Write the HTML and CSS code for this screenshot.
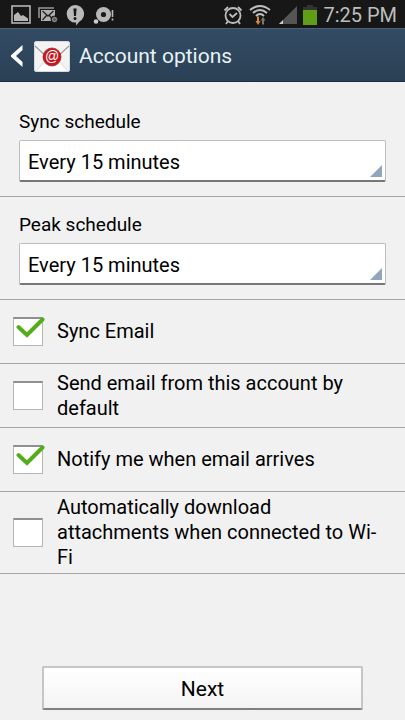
FILE: index.html
```html
<!DOCTYPE html>
<html lang="en">
<head>
<meta charset="utf-8">
<meta name="viewport" content="width=device-width, initial-scale=1">
<title>Account options</title>
<link rel="stylesheet" href="styles.css">
</head>
<body>
<div class="status">
  <div class="status-group notices">
    <svg width="20" height="20" viewBox="0 0 20 20" aria-hidden="true"><rect x="1" y="1" width="18" height="17" fill="none" stroke="#b5b5b5" stroke-width="1.6"/><path d="M3 16V10l4-3 3 4 2-1 5 3.500V16z" fill="#b5b5b5"/></svg>
    <svg width="20" height="20" viewBox="0 0 20 20" aria-hidden="true"><path d="M1 13V3h15" fill="none" stroke="#999" stroke-width="1.500"/><rect x="3" y="5" width="14" height="11" fill="#b0b0b0"/><path d="M4.500 6l5.500 5L15.500 6M4.500 15l4-4.500M15 15l-3.500-4.500" fill="none" stroke="#222" stroke-width="1.300"/><circle cx="16.500" cy="14.500" r="3.500" fill="#555" stroke="#151515"/><circle cx="16.500" cy="14.500" r="1.900" fill="none" stroke="#999"/></svg>
    <svg width="20" height="22" viewBox="0 0 20 22" aria-hidden="true"><path d="M10 1a8.800 8.800 0 1 0 1 17.600V21.500l3.500-4A8.800 8.800 0 0 0 10 1z" fill="#bababa"/><path d="M8.400 4.500h3.200l-.6 7.500H9z" fill="#181818"/><circle cx="10" cy="14.500" r="1.500" fill="#181818"/></svg>
    <svg width="22" height="20" viewBox="0 0 22 20" aria-hidden="true"><circle cx="11.500" cy="9.500" r="7.500" fill="#b8b8b8"/><circle cx="11.500" cy="9.500" r="2.600" fill="#1b1b1b"/><circle cx="4" cy="16.500" r="2.300" fill="#ccc"/><path d="M20.500 5v7M20.500 13.500v2" stroke="#bbb" stroke-width="1.600"/></svg>
  </div>
  <div class="status-group">
    <svg width="20" height="20" viewBox="0 0 20 20" aria-hidden="true"><g fill="none" stroke="#bcbcbc" stroke-width="1.800"><circle cx="10" cy="10.500" r="7.500"/><path d="M6.500 9l3 3 4.500-4M1.500 5.500L5 2M18.500 5.500L15 2M5 16l-2 3M15 16l2 3"/></g></svg>
    <svg class="wifi" width="22" height="22" viewBox="0 0 22 22" aria-hidden="true"><g fill="none" stroke="#c0c0c0" stroke-width="2"><path d="M1 6q10-8 20 0M4 9q7-6 14 0M7 12q4-4 8 0"/></g><path d="M9 12.500v6" stroke="#d58b36" stroke-width="2"/><path d="M6.500 17L9 21l2.500-4z" fill="#d58b36"/><path d="M14 20.500v-5" stroke="#777" stroke-width="2"/><path d="M11.500 16.500L14 13l2.500 3.500z" fill="#777"/></svg>
    <svg class="signal" width="18" height="18" viewBox="0 0 18 18" aria-hidden="true"><path d="M0 18L18 0v18z" fill="#555"/><path d="M0 18l4-4v4z" fill="#ccc"/></svg>
    <svg width="14" height="20" viewBox="0 0 14 20" aria-hidden="true"><path d="M4 0h6v2h4v4H0V2h4z" fill="#333"/><path d="M0 5h14v15H0z" fill="#5f9e16"/></svg>
    <time class="clock">7:25 PM</time>
  </div>
</div>
<header class="bar">
  <button class="back" type="button" aria-label="Back"><svg width="12" height="22" viewBox="0 0 12 22"><path d="M11.500 0v5L5 11l6.500 6v5L0 11.800v-1.600z" fill="#fff"/></svg></button>
  <svg class="mail" width="36" height="31" viewBox="0 0 36 31" aria-hidden="true"><rect x=".5" y=".5" width="35" height="30" rx="1.500" fill="#f3f3f3" stroke="#d5d9dc"/><path d="M1 30l13-13h8l13 13z" fill="#fff"/><path d="M2 30l12-13M34 30L22 17" stroke="#d8d8d8" stroke-width="1"/><path d="M1 5l14 13h6L35 5" fill="none" stroke="#9b9b9b" stroke-width="1.200"/><circle cx="18" cy="16" r="9" fill="#c41920" stroke="#a5262b" stroke-width=".8"/><text class="at" x="18" y="20" text-anchor="middle">@</text></svg>
  <h1>Account options</h1>
</header>
<main>
  <form>
    <div class="field first">
      <label for="sync">Sync schedule</label>
      <div class="spinner"><select id="sync"><option>Every 15 minutes</option></select></div>
    </div>
    <div class="field">
      <label for="peak">Peak schedule</label>
      <div class="spinner"><select id="peak"><option>Every 15 minutes</option></select></div>
    </div>
    <label class="row"><span class="box"><input type="checkbox" checked><svg class="tick" width="30" height="24" viewBox="0 0 30 24" aria-hidden="true"><path d="M3.500 11l8.500 8L27.500 3.500" /></svg></span><span>Sync Email</span></label>
    <label class="row"><span class="box"><input type="checkbox"></span><span>Send email from this account by default</span></label>
    <label class="row"><span class="box"><input type="checkbox" checked><svg class="tick" width="30" height="24" viewBox="0 0 30 24" aria-hidden="true"><path d="M3.500 11l8.500 8L27.500 3.500" /></svg></span><span>Notify me when email arrives</span></label>
    <label class="row"><span class="box"><input type="checkbox"></span><span>Automatically download attachments when connected to Wi-Fi</span></label>
  </form>
</main>
<footer><button class="next" type="button">Next</button></footer>
</body>
</html>
```
FILE: styles.css
```css
* { box-sizing: border-box; }
body {
  margin: 0;
  min-height: 100vh;
  display: flex;
  flex-direction: column;
  background: #f1f1f1;
  color: #000;
  font: 20px/25px Roboto, "Liberation Sans", sans-serif;
}
button, select { font: inherit; color: inherit; }
svg { display: block; flex: none; }
.status {
  height: 28px;
  padding: 2px 8px 0 11px;
  background: #171717;
  display: flex;
  align-items: center;
  justify-content: space-between;
}
.status-group { display: flex; align-items: center; gap: 6px; }
.notices { gap: 7px; }
.signal { margin-left: 2px; }
.clock { color: #bdbdbd; }
.bar {
  height: 54px;
  padding: 2px 0 0 11px;
  display: flex;
  align-items: center;
  background: linear-gradient(#334c64, #2a4055);
  border-top: 1px solid #496078;
  border-bottom: 1px solid #1c2b3e;
}
.back { padding: 0; border: 0; background: none; margin-right: 11px; }
.at { font: 14px "Liberation Sans", sans-serif; fill: #fff; }
h1 {
  margin: 0 0 0 9px;
  font-size: 21px;
  font-weight: 400;
  color: #e6f2f5;
}
main { flex: 1; }
.field {
  padding: 15px 19px 14px;
  border-bottom: 1px solid #a5a5a5;
}
.field.first { padding-top: 27px; }
.field label { display: block; margin-bottom: 6px; font-size: 19px; }
.spinner { position: relative; }
.spinner::after {
  content: "";
  position: absolute;
  right: 4px;
  bottom: 5px;
  width: 12px;
  height: 12px;
  background: #91a6bd;
  clip-path: polygon(100% 0, 100% 100%, 0 100%);
  pointer-events: none;
}
select {
  appearance: none;
  display: block;
  width: 100%;
  height: 42px;
  padding: 3px 8px 0;
  background: #fff;
  border: 1px solid #bdbdbd;
  border-bottom: 2px solid #777;
  border-radius: 2px;
}
.row {
  min-height: 64px;
  padding: 3px 20px 3px 13px;
  display: flex;
  align-items: center;
  gap: 14px;
  border-bottom: 1px solid #a5a5a5;
}
.box { position: relative; flex: none; }
.box input {
  appearance: none;
  display: block;
  width: 30px;
  height: 29px;
  margin: 0;
  background: #fff;
  border: 1px solid #b5b5b5;
  border-top: 2px solid #909090;
}
.tick { position: absolute; left: 2px; top: -1px; pointer-events: none; }
.tick path { fill: none; stroke: #53ad19; stroke-width: 4; stroke-linecap: round; }
footer { padding: 0 42px 10px; }
.next {
  display: block;
  width: 100%;
  height: 44px;
  padding: 2px 0 0;
  font-size: 21px;
  background: linear-gradient(#fff, #f4f4f4);
  border: 2px solid #c6c6c6;
  border-bottom-color: #808080;
  border-radius: 2px;
}
```
